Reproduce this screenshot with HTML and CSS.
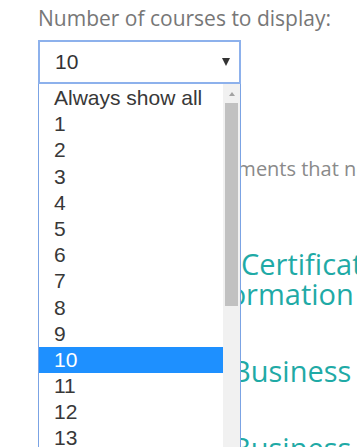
FILE: index.html
```html
<!DOCTYPE html>
<html lang="en">
  <head>
    <meta charset="UTF-8" />
    <meta name="viewport" content="width=device-width, initial-scale=1.0" />
    <title>Courses</title>
    <link rel="stylesheet" href="styles.css">
  </head>
  <body>
    <div class="wrap">
      <label class="field-label">Number of courses to display:</label>

      <!-- Select, shown open -->
      <div class="select-wrap">
        <div class="select-box">
          <span>10</span>
          <span class="arrow"></span>
        </div>
        <div class="dropdown">
          <div class="options">
            <div class="option">Always show all</div>
            <div class="option">1</div>
            <div class="option">2</div>
            <div class="option">3</div>
            <div class="option">4</div>
            <div class="option">5</div>
            <div class="option">6</div>
            <div class="option">7</div>
            <div class="option">8</div>
            <div class="option">9</div>
            <div class="option selected">10</div>
            <div class="option">11</div>
            <div class="option">12</div>
            <div class="option">13</div>
            <div class="option">14</div>
          </div>
          <div class="scrollbar">
            <div class="scroll-btn"><span class="scroll-up"></span></div>
            <div class="scroll-thumb"></div>
          </div>
        </div>
      </div>

      <!-- Page content behind the list -->
      <p class="intro">requirements that need to be met</p>
      <h2 class="course">
        <span class="line line-cert">Certificate in</span>
        <span class="line line-info">Information Technology</span>
      </h2>
      <h2 class="course"><span class="line line-biz">Business Studies</span></h2>
      <h2 class="course"><span class="line line-biz">Business Administration</span></h2>
    </div>
  </body>
</html>
```

FILE: styles.css
```css
html, body {
  margin: 0;
  height: 100%;
}

body {
  font-family: "Open Sans", Arial, sans-serif;
  background: #fff;
  overflow: hidden;
}

.wrap {
  padding: 4px 0 0 38px;
}

.field-label {
  display: block;
  font-size: 21px;
  line-height: 28px;
  color: #777;
  white-space: nowrap;
}

/* Select */
.select-wrap {
  position: relative;
  width: 203px;
  margin-top: 8px;
  z-index: 10;
}

.select-box {
  box-sizing: border-box;
  height: 44px;
  border: 2px solid #8db1ec;
  display: flex;
  align-items: center;
  justify-content: space-between;
  padding: 0 9px 0 15px;
  font-family: "Liberation Sans", Arial, sans-serif;
  font-size: 21px;
  color: #333;
  background: #fff;
}

.arrow {
  width: 0;
  height: 0;
  border-left: 4px solid transparent;
  border-right: 4px solid transparent;
  border-top: 8px solid #333;
}

.dropdown {
  position: absolute;
  top: 100%;
  left: 0;
  box-sizing: border-box;
  width: 203px;
  height: 380px;
  display: flex;
  background: #fff;
  border-left: 1px solid #7ba3e4;
  border-right: 1px solid #7ba3e4;
  overflow: hidden;
}

.options {
  flex: 1;
  padding-top: 1px;
}

.option {
  height: 26.2px;
  line-height: 26.2px;
  padding-left: 15px;
  font-family: "Liberation Sans", Arial, sans-serif;
  font-size: 21px;
  color: #383838;
  white-space: nowrap;
}

.option.selected {
  background: #1e90ff;
  color: #fff;
}

.scrollbar {
  width: 17px;
  background: #f1f1f1;
  display: flex;
  flex-direction: column;
  align-items: center;
}

.scroll-btn {
  height: 17px;
  width: 100%;
  display: flex;
  align-items: center;
  justify-content: center;
  padding-top: 3px;
  box-sizing: border-box;
}

.scroll-up {
  width: 0;
  height: 0;
  border-left: 3.5px solid transparent;
  border-right: 3.5px solid transparent;
  border-bottom: 4px solid #a3a3a3;
}

.scroll-thumb {
  width: 13px;
  height: 203px;
  margin-top: 2px;
  background: #c1c1c1;
}

/* Background content */
.intro {
  margin: 70px 0 0 131px;
  font-size: 20px;
  line-height: 30px;
  color: #8a8a8a;
  white-space: nowrap;
}

.course {
  margin: 47px 0 0;
  font-family: "Open Sans", sans-serif;
  font-weight: 400;
  font-size: 29px;
  line-height: 30px;
  color: #1faaa6;
  white-space: nowrap;
}

.intro + .course {
  margin-top: 65px;
}

.line {
  display: block;
}

.line-cert {
  margin-left: 203px;
}

.line-info {
  margin-left: 155px;
}

.line-biz {
  margin-left: 194px;
}
```
